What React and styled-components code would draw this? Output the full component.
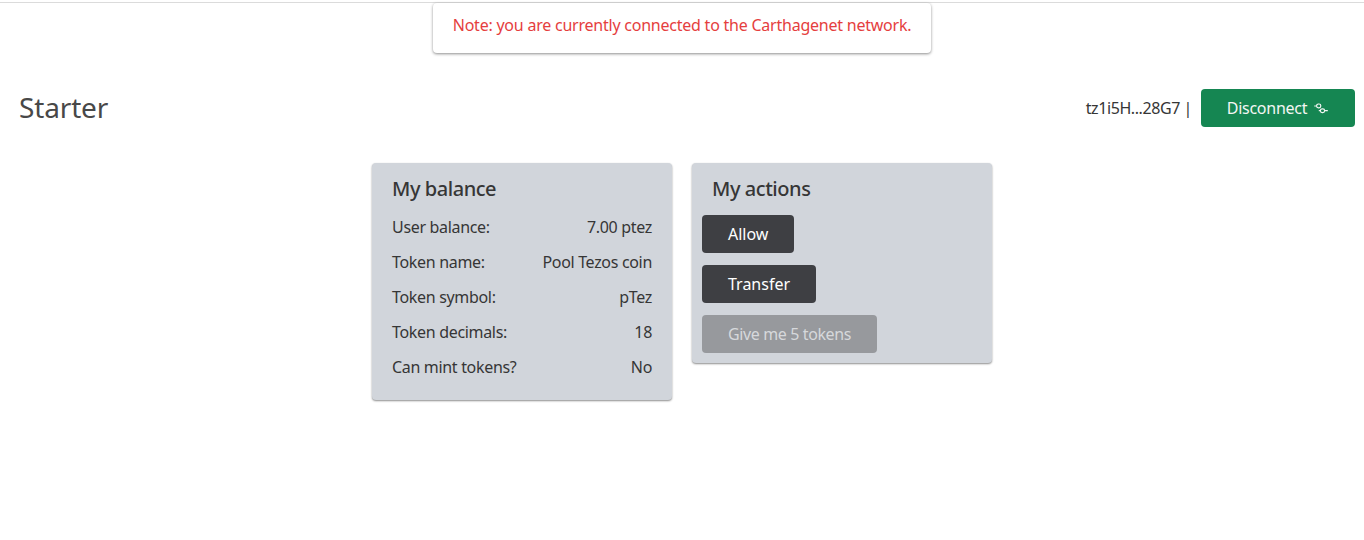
import React from "react";
import styled, { createGlobalStyle } from "styled-components";

const GlobalStyle = createGlobalStyle`
  html, body {
    margin: 0;
    padding: 0;
    background: #fff;
  }
  body {
    font-family: "Noto Sans", "Open Sans", sans-serif;
    font-size: 16px;
    color: #363636;
  }
`;

const rows = [
  ["User balance:", "7.00 ptez"],
  ["Token name:", "Pool Tezos coin"],
  ["Token symbol:", "pTez"],
  ["Token decimals:", "18"],
  ["Can mint tokens?", "No"],
];

const UnlinkIcon = () => (
  <svg width="14" height="11" viewBox="0 0 14 11" fill="none" stroke="currentColor" strokeWidth="1.2">
    <rect x="2.6" y="1" width="4.2" height="3.8" rx="1.8" />
    <rect x="6.4" y="5.8" width="4.2" height="3.8" rx="1.8" />
    <path d="M0.2 3H2.6M6.4 7.7H4.8M10.6 7.7H13.8" />
  </svg>
);

const App = () => {
  return (
    <>
      <GlobalStyle />
      <Page>
        <Notice>Note: you are currently connected to the Carthagenet network.</Notice>
        <Header>
          <Title>Starter</Title>
          <Wallet>
            <Address>tz1i5H...28G7 |</Address>
            <DisconnectBtn>
              Disconnect <UnlinkIcon />
            </DisconnectBtn>
          </Wallet>
        </Header>
        <Cards>
          <Card $pb="15px">
            <CardTitle>My balance</CardTitle>
            {rows.map(([label, value]) => (
              <Row key={label}>
                <span>{label}</span>
                <span>{value}</span>
              </Row>
            ))}
          </Card>
          <Card $pb="10px">
            <CardTitle>My actions</CardTitle>
            <Actions>
              <ActionBtn>Allow</ActionBtn>
              <ActionBtn>Transfer</ActionBtn>
              <ActionBtn disabled>Give me 5 tokens</ActionBtn>
            </Actions>
          </Card>
        </Cards>
      </Page>
    </>
  );
};

export default App;

const Page = styled.div`
  position: relative;
  min-height: 537px;
  box-sizing: border-box;
  border-top: 1px solid #dbdbdb;
  margin-top: 2px;
  padding: 86px 9px 0 19px;
`;

const Notice = styled.div`
  position: absolute;
  top: 0;
  left: 433px;
  width: 498px;
  height: 50px;
  box-sizing: border-box;
  padding-bottom: 6px;
  display: flex;
  align-items: center;
  justify-content: center;
  background: #fff;
  color: #e53e3e;
  font-size: 16px;
  letter-spacing: -0.23px;
  border-radius: 4px;
  box-shadow: 0 1px 3px rgba(0, 0, 0, 0.45);
`;

const Header = styled.header`
  display: flex;
  align-items: center;
  justify-content: space-between;
  height: 38px;
`;

const Title = styled.h1`
  margin: -2px 0 0;
  font-size: 28px;
  font-weight: 400;
  line-height: 38px;
  letter-spacing: -0.15px;
  color: #484848;
`;

const Wallet = styled.div`
  display: flex;
  align-items: center;
  gap: 9px;
`;

const Address = styled.span`
  color: #363636;
  letter-spacing: -0.42px;
`;

const DisconnectBtn = styled.button`
  width: 154px;
  height: 38px;
  display: flex;
  align-items: center;
  justify-content: center;
  gap: 7px;
  padding: 0 1px 0 0;
  border: none;
  border-radius: 4px;
  background: #158652;
  color: #f3f6f4;
  font-family: inherit;
  font-size: 16px;
  letter-spacing: -0.25px;
`;

const Cards = styled.main`
  display: flex;
  align-items: flex-start;
  justify-content: center;
  gap: 20px;
  margin-top: 36px;
  padding-right: 10px;
`;

const Card = styled.section`
  width: 300px;
  box-sizing: border-box;
  padding: 0 20px ${(p) => p.$pb};
  background: #d1d5db;
  border-radius: 4px;
  box-shadow: 0 1px 2px rgba(0, 0, 0, 0.45);
`;

const CardTitle = styled.h2`
  margin: 0;
  padding-top: 12px;
  font-size: 20px;
  font-weight: 500;
  line-height: 28px;
  letter-spacing: -0.45px;
  color: #363636;
`;

const Row = styled.div`
  display: flex;
  justify-content: space-between;
  height: 35px;
  line-height: 35px;
  color: #363636;
  letter-spacing: -0.32px;

  &:first-of-type {
    margin-top: 7px;
  }
`;

const Actions = styled.div`
  display: flex;
  flex-direction: column;
  align-items: flex-start;
  gap: 12px;
  margin: 12px 0 0 -10px;
`;

const ActionBtn = styled.button`
  height: 38px;
  padding: 0 26px;
  border: none;
  border-radius: 4px;
  background: #3e3f43;
  color: #fff;
  font-family: inherit;
  font-size: 16px;
  letter-spacing: 0;

  &:disabled {
    background: #97999d;
    color: #d6d8db;
    letter-spacing: -0.38px;
  }
`;
